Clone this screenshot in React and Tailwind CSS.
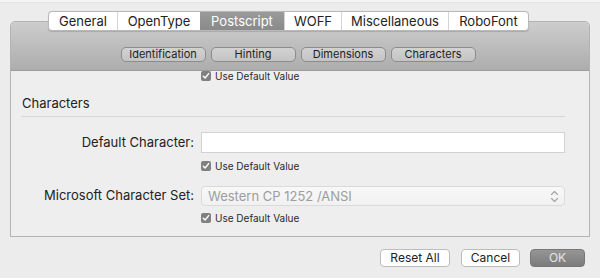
import React from 'react';

const tabs = [
  { label: 'General', w: 'w-[68px]' },
  { label: 'OpenType', w: 'w-[83px]' },
  { label: 'Postscript', w: 'w-[84px]', active: true },
  { label: 'WOFF', w: 'w-[57px]' },
  { label: 'Miscellaneous', w: 'w-[107px]' },
  { label: 'RoboFont', w: 'w-[80px]' },
];

const subTabs = ['Identification', 'Hinting', 'Dimensions', 'Characters'];

// small checked checkbox with label
function DefaultCheck() {
  return (
    <div className="flex items-center h-[14px]">
      <div className="w-[10px] h-[10px] rounded-[2px] bg-[#808080] flex items-center justify-center">
        <svg width="8" height="8" viewBox="0 0 8 8">
          <path d="M1.3 4.2 L3.1 6 L6.7 1.6" fill="none" stroke="white" strokeWidth="1.4" strokeLinecap="round" strokeLinejoin="round" />
        </svg>
      </div>
      <span className="ml-[4px] text-[10px] text-[#2a2a2a] leading-none">Use Default Value</span>
    </div>
  );
}

export default function App() {
  return (
    <div className="w-[600px] h-[278px] bg-[#ececec] overflow-hidden font-['Inter','Liberation_Sans',sans-serif] text-[#222]">
      {/* window top strip */}
      <div className="h-[3px] bg-[#f4f4f4] border-b border-[#e4e4e4]" />

      {/* tab bar */}
      <div className="mt-[8px] ml-[48px] relative z-10 flex h-[20px] w-fit bg-white border border-[#b9b9b9] rounded-[4px] overflow-hidden shadow-[0_0.5px_1px_rgba(0,0,0,0.15)]">
        {tabs.map((t, i) => (
          <div
            key={t.label}
            className={`${t.w} flex items-center justify-center text-[13px] leading-none ${
              i > 0 ? 'border-l border-[#d4d4d4]' : ''
            } ${t.active ? 'bg-gradient-to-b from-[#9a9a9a] to-[#8a8a8a] text-white border-l-0' : ''}`}
          >
            {t.label}
          </div>
        ))}
      </div>

      {/* main panel */}
      <div className="mx-[10px] -mt-[10px] h-[216px] border border-[#b3b3b3] rounded-t-[5px] flex flex-col overflow-hidden">
        <div className="h-[49px] shrink-0 bg-gradient-to-b from-[#cdcdcd] to-[#adadad] border-b border-[#9c9c9c] flex justify-center pt-[25px] gap-[5px] pr-[4px]">
          {subTabs.map((s) => (
            <div
              key={s}
              className="w-[85px] h-[15px] rounded-[5px] border border-[#8c8c8c] bg-gradient-to-b from-[#d2d2d2] to-[#c4c4c4] text-[11px] leading-none flex items-center justify-center text-[#1e1e1e]"
            >
              {s}
            </div>
          ))}
        </div>

        <div className="flex-1 bg-[#eeeeee] overflow-hidden">
          <div className="-mt-[2px] ml-[190px]">
            <DefaultCheck />
          </div>

          <div className="mt-[13px] ml-[11px] h-[16px] flex items-center text-[13px]">Characters</div>
          <div className="mt-[4px] ml-[10px] w-[544px] h-px bg-[#d6d6d6]" />

          <div className="mt-[15px] grid grid-cols-[183px_364px] gap-x-[7px] items-center">
            <div className="text-right text-[13px]">Default Character:</div>
            <div className="h-[21px] bg-white border border-[#d2d2d2]" />
          </div>
          <div className="mt-[6px] ml-[190px]">
            <DefaultCheck />
          </div>

          <div className="mt-[13px] grid grid-cols-[183px_364px] gap-x-[7px] items-center">
            <div className="text-right text-[13px]">Microsoft Character Set:</div>
            <div className="h-[20px] rounded-[4px] bg-gradient-to-b from-[#f8f8f8] to-[#f1f1f1] border border-[#dadada] flex items-center justify-between pl-[6px] pr-[5px]">
              <span className="text-[13px] text-[#9d9d9d] leading-none">Western CP 1252 /ANSI</span>
              <svg width="9" height="13" viewBox="0 0 9 13">
                <path d="M1.5 4.5 L4.5 1.5 L7.5 4.5 M1.5 8.5 L4.5 11.5 L7.5 8.5" fill="none" stroke="#a3a3a3" strokeWidth="1.1" strokeLinecap="round" strokeLinejoin="round" />
              </svg>
            </div>
          </div>
          <div className="mt-[5px] ml-[190px]">
            <DefaultCheck />
          </div>
        </div>
      </div>

      {/* footer buttons */}
      <div className="mt-[12px] mr-[15px] flex justify-end gap-[10px]">
        <div className="w-[70px] h-[18px] bg-white border border-[#bcbcbc] rounded-[4px] text-[12px] leading-none flex items-center justify-center">Reset All</div>
        <div className="w-[59px] h-[18px] ml-[1px] bg-white border border-[#bcbcbc] rounded-[4px] text-[12px] leading-none flex items-center justify-center">Cancel</div>
        <div className="w-[55px] h-[18px] rounded-[4px] border border-[#777] bg-gradient-to-b from-[#969696] to-[#7b7b7b] text-[12px] leading-none text-[#e6e6e6] flex items-center justify-center">OK</div>
      </div>
    </div>
  );
}
